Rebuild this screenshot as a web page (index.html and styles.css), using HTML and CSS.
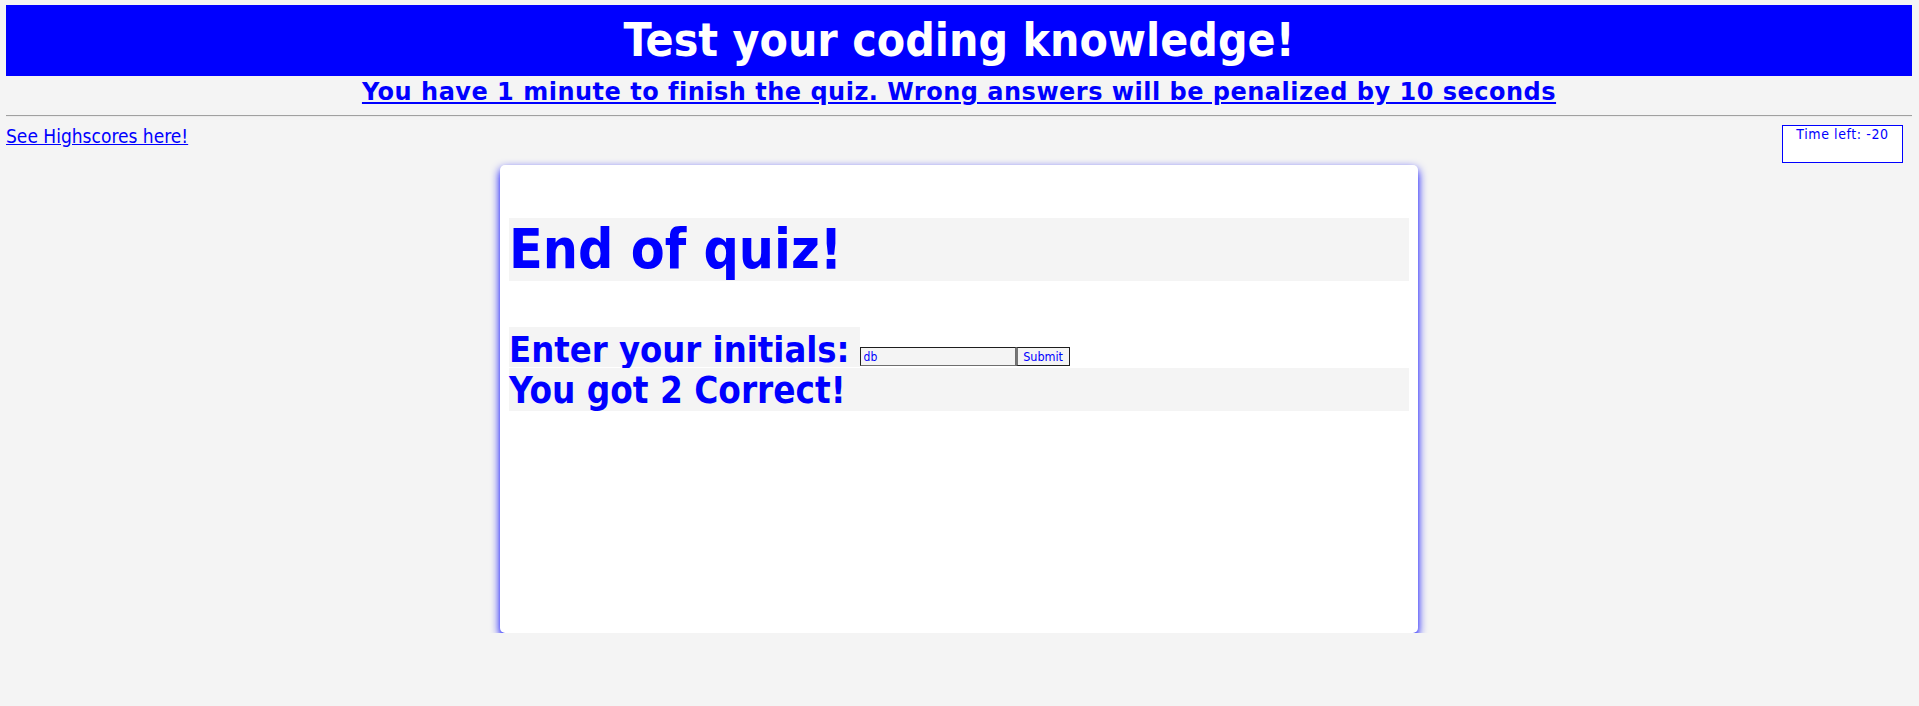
FILE: index.html
```html
<!DOCTYPE html>
<html lang="en">
<head>
<meta charset="utf-8">
<title>Coding Quiz</title>
<link rel="stylesheet" href="styles.css">
</head>
<body>
<header class="banner">
  <h1 class="banner-title">Test your coding knowledge!</h1>
</header>
<h2 class="intro"><a class="intro-link" href="#">You have 1 minute to finish the quiz. Wrong answers will be penalized by 10 seconds</a></h2>
<hr class="rule">
<div class="toolbar">
  <a class="scores-link" href="#">See Highscores here!</a>
  <div class="timer">Time left: -20</div>
</div>
<main class="card">
  <h1 class="end-title">End of quiz!</h1>
  <form class="initials-row">
    <label class="initials-label" for="initials">Enter your initials:</label>
    <input id="initials" class="initials-input" type="text" value="db">
    <button class="submit-btn" type="button">Submit</button>
  </form>
  <h2 class="score">You got 2 Correct!</h2>
</main>
</body>
</html>
```

FILE: styles.css
```css
html {
  background: #f4f4f4;
}

body {
  margin: 5px 7px 40px 6px;
  font-family: "DejaVu Sans Condensed", "DejaVu Sans", sans-serif;
  color: #0000ff;
}

.banner {
  background: #0000ff;
  height: 71px;
  display: flex;
  align-items: center;
  justify-content: center;
}

.banner-title {
  margin: 0;
  color: #ffffff;
  font-size: 46px;
  font-weight: bold;
  line-height: 71px;
}

.intro {
  margin: 2px 0 0;
  text-align: center;
  font-family: "DejaVu Sans", sans-serif;
  font-size: 24px;
  font-weight: bold;
  letter-spacing: 0.5px;
  line-height: 28px;
}

.intro-link {
  color: #0000ff;
}

.rule {
  margin: 9px 0 0;
  border: 0;
  border-top: 1px solid #a0a0a0;
  border-bottom: 1px solid #ececec;
  height: 0;
}

.toolbar {
  margin-top: 8px;
  display: flex;
  justify-content: space-between;
  align-items: flex-start;
}

.scores-link {
  color: #0000ff;
  font-size: 19px;
  line-height: 22px;
}

.timer {
  box-sizing: border-box;
  width: 121px;
  height: 38px;
  margin-right: 9px;
  padding-top: 1px;
  border: 1px solid #0000ff;
  background: #ffffff;
  font-size: 14px;
  line-height: 15px;
  text-align: center;
  letter-spacing: 0.6px;
}

.card {
  box-sizing: border-box;
  width: 918px;
  height: 468px;
  margin: 2px auto 0;
  padding: 53px 9px 0;
  background: #ffffff;
  border-radius: 5px;
  box-shadow: 0 4px 10px 0 #0000ff, 0 8px 6px -4px rgba(0, 0, 255, 0.6);
  display: flex;
  flex-direction: column;
}

.end-title {
  margin: 0;
  height: 63px;
  background: #f4f4f4;
  font-size: 55px;
  font-weight: bold;
  line-height: 63px;
}

.initials-row {
  margin: 46px 0 0;
  display: flex;
  align-items: flex-end;
}

.initials-label {
  height: 40px;
  padding-right: 10px;
  background: #f4f4f4;
  font-size: 36px;
  font-weight: bold;
  line-height: 46px;
}

.initials-input {
  box-sizing: border-box;
  width: 156px;
  height: 19px;
  margin: 0 0 1px;
  padding: 0 3px;
  border: 1px solid;
  border-color: #1e1e1e #6f6f6f #6f6f6f #1e1e1e;
  background: #f4f4f4;
  color: #0000ff;
  font-family: "DejaVu Sans Condensed", "DejaVu Sans", sans-serif;
  font-size: 12px;
  outline: none;
}

.submit-btn {
  box-sizing: border-box;
  width: 54px;
  height: 19px;
  margin: 0 0 1px;
  padding: 0;
  border: 1px solid #1e1e1e;
  border-left: 2px solid #767676;
  background: #f4f4f4;
  color: #0000ff;
  font-family: "DejaVu Sans Condensed", "DejaVu Sans", sans-serif;
  font-size: 12.5px;
  line-height: 16px;
}

.score {
  margin: 1px 0 0;
  height: 43px;
  background: #f4f4f4;
  font-size: 36.5px;
  font-weight: bold;
  line-height: 46px;
}
```
